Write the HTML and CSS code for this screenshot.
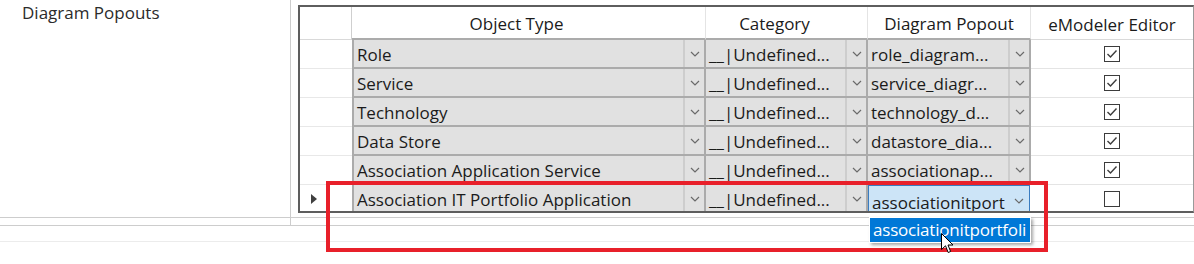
FILE: index.html
```html
<!DOCTYPE html>
<html lang="en">
<head>
<meta charset="utf-8">
<title>Diagram Popouts</title>
<link rel="stylesheet" href="styles.css">
</head>
<body>
<div class="window">
  <div class="main">
    <div class="side">
      <div class="side-label">Diagram Popouts</div>
    </div>
    <div class="pane">
      <div class="grid">
        <div class="hd hd-corner"></div>
        <div class="hd hd-combo hd-shift">Object Type</div>
        <div class="hd hd-combo hd-shift">Category</div>
        <div class="hd hd-combo">Diagram Popout</div>
        <div class="hd hd-last">eModeler Editor</div>

        <div class="rh"></div>
        <div class="combo first"><span class="ct">Role</span><span class="cb"><svg class="chev" viewBox="0 0 10 6"><path d="M1 1 L5 5 L9 1"/></svg></span></div>
        <div class="combo"><span class="ct">__|Undefined...</span><span class="cb"><svg class="chev" viewBox="0 0 10 6"><path d="M1 1 L5 5 L9 1"/></svg></span></div>
        <div class="combo"><span class="ct">role_diagram...</span><span class="cb"><svg class="chev" viewBox="0 0 10 6"><path d="M1 1 L5 5 L9 1"/></svg></span></div>
        <div class="chk"><svg class="box" viewBox="0 0 16 16"><rect x="0.5" y="0.5" width="15" height="15"/><path d="M3.5 8 L6.5 11 L12.5 4.5"/></svg></div>

        <div class="rh"></div>
        <div class="combo first"><span class="ct">Service</span><span class="cb"><svg class="chev" viewBox="0 0 10 6"><path d="M1 1 L5 5 L9 1"/></svg></span></div>
        <div class="combo"><span class="ct">__|Undefined...</span><span class="cb"><svg class="chev" viewBox="0 0 10 6"><path d="M1 1 L5 5 L9 1"/></svg></span></div>
        <div class="combo"><span class="ct">service_diagr...</span><span class="cb"><svg class="chev" viewBox="0 0 10 6"><path d="M1 1 L5 5 L9 1"/></svg></span></div>
        <div class="chk"><svg class="box" viewBox="0 0 16 16"><rect x="0.5" y="0.5" width="15" height="15"/><path d="M3.5 8 L6.5 11 L12.5 4.5"/></svg></div>

        <div class="rh"></div>
        <div class="combo first"><span class="ct">Technology</span><span class="cb"><svg class="chev" viewBox="0 0 10 6"><path d="M1 1 L5 5 L9 1"/></svg></span></div>
        <div class="combo"><span class="ct">__|Undefined...</span><span class="cb"><svg class="chev" viewBox="0 0 10 6"><path d="M1 1 L5 5 L9 1"/></svg></span></div>
        <div class="combo"><span class="ct">technology_d...</span><span class="cb"><svg class="chev" viewBox="0 0 10 6"><path d="M1 1 L5 5 L9 1"/></svg></span></div>
        <div class="chk"><svg class="box" viewBox="0 0 16 16"><rect x="0.5" y="0.5" width="15" height="15"/><path d="M3.5 8 L6.5 11 L12.5 4.5"/></svg></div>

        <div class="rh"></div>
        <div class="combo first"><span class="ct">Data Store</span><span class="cb"><svg class="chev" viewBox="0 0 10 6"><path d="M1 1 L5 5 L9 1"/></svg></span></div>
        <div class="combo"><span class="ct">__|Undefined...</span><span class="cb"><svg class="chev" viewBox="0 0 10 6"><path d="M1 1 L5 5 L9 1"/></svg></span></div>
        <div class="combo"><span class="ct">datastore_dia...</span><span class="cb"><svg class="chev" viewBox="0 0 10 6"><path d="M1 1 L5 5 L9 1"/></svg></span></div>
        <div class="chk"><svg class="box" viewBox="0 0 16 16"><rect x="0.5" y="0.5" width="15" height="15"/><path d="M3.5 8 L6.5 11 L12.5 4.5"/></svg></div>

        <div class="rh"></div>
        <div class="combo first"><span class="ct">Association Application Service</span><span class="cb"><svg class="chev" viewBox="0 0 10 6"><path d="M1 1 L5 5 L9 1"/></svg></span></div>
        <div class="combo"><span class="ct">__|Undefined...</span><span class="cb"><svg class="chev" viewBox="0 0 10 6"><path d="M1 1 L5 5 L9 1"/></svg></span></div>
        <div class="combo"><span class="ct">associationap...</span><span class="cb"><svg class="chev" viewBox="0 0 10 6"><path d="M1 1 L5 5 L9 1"/></svg></span></div>
        <div class="chk"><svg class="box" viewBox="0 0 16 16"><rect x="0.5" y="0.5" width="15" height="15"/><path d="M3.5 8 L6.5 11 L12.5 4.5"/></svg></div>

        <div class="rh rh-current"><svg class="tri" viewBox="0 0 8 12"><path d="M1 1 L7 6 L1 11 Z"/></svg></div>
        <div class="combo first"><span class="ct">Association IT Portfolio Application</span><span class="cb"><svg class="chev" viewBox="0 0 10 6"><path d="M1 1 L5 5 L9 1"/></svg></span></div>
        <div class="combo"><span class="ct">__|Undefined...</span><span class="cb"><svg class="chev" viewBox="0 0 10 6"><path d="M1 1 L5 5 L9 1"/></svg></span></div>
        <div class="combo editing"><span class="ct ct-edit">associationitport</span><span class="cb cb-edit"><svg class="chev" viewBox="0 0 10 6"><path d="M1 1 L5 5 L9 1"/></svg></span></div>
        <div class="chk"><svg class="box" viewBox="0 0 16 16"><rect x="0.5" y="0.5" width="15" height="15"/></svg></div>
      </div>
    </div>
  </div>
  <div class="strip"><div class="strip-left"></div></div>
  <div class="footer"></div>

  <div class="popup"><span class="popup-text">associationitportfoli</span></div>
  <div class="highlight"></div>
  <svg class="cursor" viewBox="0 0 13 21"><path d="M0.5 0.5 L0.5 16.5 L4.5 12.8 L7.2 19.5 L9.6 18.5 L7 12 L12 12 Z"/></svg>
</div>
</body>
</html>
```

FILE: styles.css
```css
* { box-sizing: border-box; }
html, body { margin: 0; padding: 0; background: #ffffff; }
body {
  font-family: "Open Sans", "Noto Sans", "Liberation Sans", sans-serif;
  font-size: 17px;
  color: #1b1b1b;
}
.window {
  position: relative;
  width: 1194px;
  height: 264px;
  overflow: hidden;
}
.main {
  display: flex;
  height: 218px;
  border-bottom: 1px solid #cdcdcd;
}
.side {
  width: 291px;
  border-right: 1px solid #cdcdcd;
  padding: 1px 0 0 22px;
}
.side-label {
  color: #2b2b2b;
  line-height: 23px;
}
.pane {
  flex: 1;
  padding: 5px 0 0 7px;
}
.grid {
  display: grid;
  grid-template-columns: 52px 354px 162px 163px 162px;
  grid-template-rows: 33px repeat(6, 29px);
  height: 208px;
  overflow: hidden;
  border-top: 2px solid #5e5e5e;
  border-left: 2px solid #5e5e5e;
  border-bottom: 2px solid #5e5e5e;
  border-right: 1px solid #9a9a9a;
}
.hd {
  display: flex;
  align-items: center;
  justify-content: center;
  padding-top: 2px;
  border-right: 1px solid #e4e4e4;
  border-bottom: 1px solid #d9d9d9;
  white-space: nowrap;
}
.hd-combo { border-bottom: 2px solid #ababab; }
.hd-shift { padding-right: 24px; }
.hd-last { border-right: none; }
.hd-corner { border-right: 1px solid #cfcfcf; }
.rh {
  border-bottom: 1px solid #e8e8e8;
  display: flex;
  align-items: center;
  padding-left: 10px;
}
.tri { width: 8px; height: 12px; }
.tri path { fill: #404040; }
.combo {
  display: flex;
  align-items: stretch;
  background: #e1e1e1;
  border-right: 2px solid #ababab;
  border-bottom: 2px solid #ababab;
  min-width: 0;
}
.combo.first { border-left: 2px solid #ababab; }
.ct {
  flex: 1;
  min-width: 0;
  overflow: hidden;
  white-space: nowrap;
  padding: 2px 0 0 3px;
  line-height: 25px;
}
.cb {
  width: 21px;
  flex: none;
  display: flex;
  align-items: center;
  justify-content: center;
  border-left: 2px solid #cdcdcd;
}
.chev { width: 10px; height: 6px; }
.chev path { fill: none; stroke: #6a6a6a; stroke-width: 1.2; }
.combo.editing {
  background: #cce4f7;
  border: 1px solid #3a7cc0;
  margin: 0 1px 0 0;
}
.ct-edit { padding-top: 4px; }
.cb-edit { border-left: none; padding-top: 3px; }
.chk {
  display: flex;
  align-items: center;
  justify-content: center;
  border-bottom: 1px solid #e4e4e4;
}
.box { width: 16px; height: 16px; }
.box rect { fill: #ffffff; stroke: #3c3c3c; stroke-width: 1; }
.box path { fill: none; stroke: #3c3c3c; stroke-width: 1.4; }
.strip {
  height: 8px;
  border-bottom: 1px solid #cdcdcd;
}
.strip-left {
  width: 291px;
  height: 100%;
  border-right: 1px solid #cdcdcd;
}
.footer {
  height: 16px;
  border-bottom: 1px solid #ececec;
}
.popup {
  position: absolute;
  left: 869px;
  top: 217px;
  width: 162px;
  height: 26px;
  background: #0078d7;
  border: 1px solid #ffffff;
  box-shadow: 2px 2px 3px rgba(0, 0, 0, 0.35);
  overflow: hidden;
  white-space: nowrap;
  padding-left: 3px;
}
.popup-text {
  color: #ffffff;
  line-height: 24px;
  letter-spacing: -0.2px;
}
.highlight {
  position: absolute;
  left: 326px;
  top: 181px;
  width: 722px;
  height: 71px;
  border: 4px solid #e8202a;
}
.cursor {
  position: absolute;
  left: 941px;
  top: 233px;
  width: 13px;
  height: 21px;
}
.cursor path { fill: #ffffff; stroke: #000000; stroke-width: 1; }
```
